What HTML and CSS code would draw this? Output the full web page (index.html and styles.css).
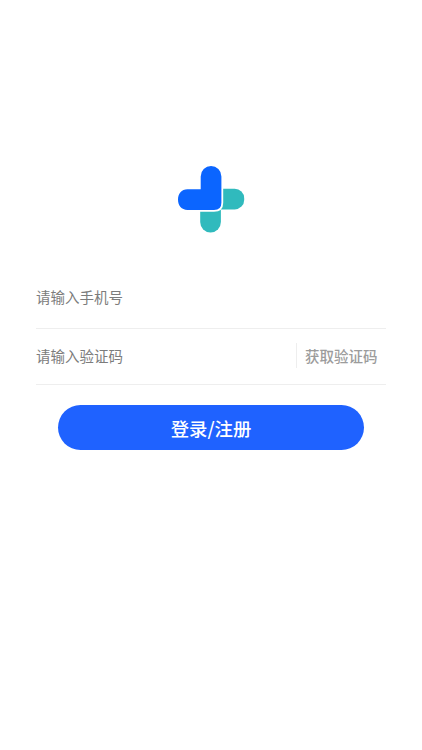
FILE: index.html
```html
<!DOCTYPE html>
<html lang="zh-CN">
<head>
<meta charset="utf-8">
<meta name="viewport" content="width=device-width, initial-scale=1">
<title>登录/注册</title>
<link rel="stylesheet" href="styles.css">
</head>
<body>
<main class="login">
  <svg class="logo" viewBox="0 0 68 68" aria-hidden="true">
    <rect class="teal" x="23.2" y="26" width="20.7" height="41.4" rx="10.3"/>
    <rect class="teal" x="27" y="23.8" width="40.2" height="20.6" rx="9.5"/>
    <path class="blue" d="M23.7 24.2V11.4a10.3 10.3 0 0 1 20.7 0V37.7Q44.4 45 37 45H10.5C4.5 45 1 40.6 1 34.6S4.5 24.2 10.5 24.2Z"/>
  </svg>
  <form class="form">
    <label class="field field-phone"><span class="hint">请输入手机号</span></label>
    <div class="field field-code">
      <span class="hint">请输入验证码</span>
      <button class="get-code" type="button">获取验证码</button>
    </div>
    <button class="submit" type="button">登录/注册</button>
  </form>
</main>
</body>
</html>
```
FILE: styles.css
```css
* {
  box-sizing: border-box;
}

body {
  margin: 0;
  background: #fff;
  font-family: "Noto Sans CJK SC", sans-serif;
}

.login {
  min-height: 750px;
  padding: 165px 36px 0;
}

.logo {
  display: block;
  width: 68px;
  height: 68px;
  margin: 0 auto;
}

.teal {
  fill: #30babd;
}

.blue {
  fill: #0b65ff;
  stroke: #fff;
  stroke-width: 3.6;
  paint-order: stroke;
}

.form {
  display: flex;
  flex-direction: column;
  margin-top: 34px;
}

.field {
  display: flex;
  align-items: center;
  padding-bottom: 2px;
  border-bottom: 1px solid #eee;
}

.field-phone {
  height: 62px;
}

.field-code {
  height: 56px;
  justify-content: space-between;
}

.hint {
  color: #7c7c7c;
  font-size: 14.5px;
  line-height: 22px;
}

.get-code {
  width: 90px;
  height: 25px;
  padding: 0 0 0 8px;
  border: 0;
  border-left: 1px solid #eee;
  background: none;
  color: #9c9c9c;
  font: 500 14.5px/22px "Noto Sans CJK SC", sans-serif;
  text-align: left;
}

.submit {
  height: 45px;
  margin: 20px 22px 0;
  padding: 1px 0 0;
  border: 0;
  border-radius: 23px;
  background: #1f62ff;
  color: #fff;
  font: 500 18.4px/44px "Noto Sans CJK SC", sans-serif;
}
```
